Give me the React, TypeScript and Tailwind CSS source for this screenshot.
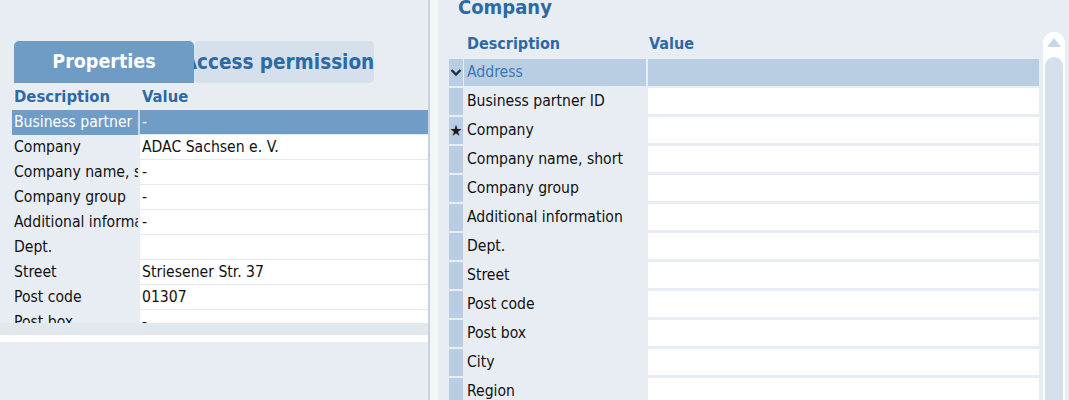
const leftRows: [string, string][] = [
  ['Business partner ID', '-'],
  ['Company', 'ADAC Sachsen e. V.'],
  ['Company name, short', '-'],
  ['Company group', '-'],
  ['Additional information', '-'],
  ['Dept.', ''],
  ['Street', 'Striesener Str. 37'],
  ['Post code', '01307'],
  ['Post box', '-'],
  ['City', 'Dresden'],
];

const rightRows = [
  'Business partner ID',
  'Company',
  'Company name, short',
  'Company group',
  'Additional information',
  'Dept.',
  'Street',
  'Post code',
  'Post box',
  'City',
  'Region',
  'Country',
];

function Chevron() {
  return (
    <svg width="12" height="9" viewBox="0 0 12 9" className="block">
      <path d="M1.5 2 L6 6.5 L10.5 2" stroke="#1f2f45" strokeWidth="2.4" fill="none" />
    </svg>
  );
}

function PropertiesPanel() {
  return (
    <div className="w-[428px] h-full flex flex-col bg-[#e8edf4]">
      {/* Tabs */}
      <div className="flex pl-[14px] pt-[41px]">
        <div className="w-[180px] h-[42px] rounded-t-[5px] bg-[#6e9cc5] flex items-center justify-center text-white font-bold text-[19.5px]">
          Properties
        </div>
        <div className="w-[180px] h-[42px] rounded-[5px] bg-[#d5e0ec] flex items-center justify-center overflow-hidden whitespace-nowrap text-[#2c6aa5] font-bold text-[20.5px]">
          <span className="shrink-0">Access permissions</span>
        </div>
      </div>

      {/* Header */}
      <div className="flex h-[27px] pt-[2px] items-center pl-[14px] text-[#2c6aa5] font-bold text-[16.5px]">
        <div className="w-[128px]">Description</div>
        <div>Value</div>
      </div>

      {/* Rows */}
      <div className="h-[213px] overflow-hidden pl-[12px]">
        {leftRows.map(([d, v], i) => {
          const sel = i === 0;
          return (
            <div key={d} className={`flex h-[25px] ${sel ? 'bg-[#6f9dc6] text-white' : 'text-[#111]'} text-[15.6px]`}>
              <div className="w-[126px] pl-[2px] pt-[1px] flex items-center overflow-hidden whitespace-nowrap">{d}</div>
              <div className={`w-[2px] ${sel ? 'bg-[#c7d8e9]' : ''}`} />
              <div className={`flex-1 pl-[2px] pt-[1px] flex items-center border-b border-[#e3e9f0] ${sel ? '' : 'bg-white'}`}>{v}</div>
            </div>
          );
        })}
      </div>
      <div className="h-[12px] bg-[#e3e8ef]" />
      <div className="h-[7px] bg-white" />
    </div>
  );
}

function Scrollbar() {
  return (
    <div className="w-[22px] ml-[4px] mt-[10px] bg-white rounded-t-[11px] flex flex-col items-center px-[2px]">
      <div className="mt-[6px] w-0 h-0 border-l-[7px] border-r-[7px] border-b-[9px] border-l-transparent border-r-transparent border-b-[#c7d7e8]" />
      <div className="mt-[10px] w-full flex-1 bg-[#d4e0ec] rounded-t-[9px]" />
    </div>
  );
}

function CompanyPanel() {
  return (
    <div className="flex-1 h-full bg-[#e8edf4] flex flex-col overflow-hidden">
      <div className="pl-[20px] -mt-[8px] h-[30px] text-[#2c6aa5] font-bold text-[20px] leading-[30px]">Company</div>
      <div className="flex flex-1">
        <div className="pl-[11px] flex flex-col">
          <div className="flex h-[37px] pt-[7px] items-center text-[#2c6aa5] font-bold text-[16px]">
            <div className="w-[200px] pl-[18px]">Description</div>
            <div>Value</div>
          </div>
          {/* Address group row */}
          <div className="flex h-[29px]">
            <div className="w-[14px] h-[27px] bg-[#b9cee3] flex items-center justify-center">
              <Chevron />
            </div>
            <div className="w-[182px] h-[27px] ml-[1px] pl-[3px] bg-[#b9cee3] flex items-center text-[#3a78b6] text-[15.6px]">
              Address
            </div>
            <div className="w-[391px] h-[27px] ml-[2px] bg-[#b9cee3]" />
          </div>
          {rightRows.map((d) => (
            <div key={d} className="flex h-[29px]">
              <div className="w-[14px] h-[27px] bg-[#b9cee3] flex items-center justify-center text-[16px] text-[#1a1a1a] leading-none">
                {d === 'Company' ? '★' : ''}
              </div>
              <div className="w-[182px] h-[27px] ml-[1px] pl-[3px] flex items-center text-[#111] text-[15.6px] whitespace-nowrap">
                {d}
              </div>
              <div className="w-[391px] h-[26px] ml-[2px] bg-white" />
            </div>
          ))}
        </div>
        <Scrollbar />
      </div>
    </div>
  );
}

export default function App() {
  return (
    <div
      className="w-[1069px] h-[400px] overflow-hidden flex bg-[#e8edf4]"
      style={{ fontFamily: 'Tahoma, "DejaVu Sans Condensed", "DejaVu Sans", sans-serif' }}
    >
      <PropertiesPanel />
      <div className="w-[2px] h-full bg-[#c9d1dc]" />
      <div className="w-[8px] h-full bg-[#f3f6f9]" />
      <CompanyPanel />
    </div>
  );
}
